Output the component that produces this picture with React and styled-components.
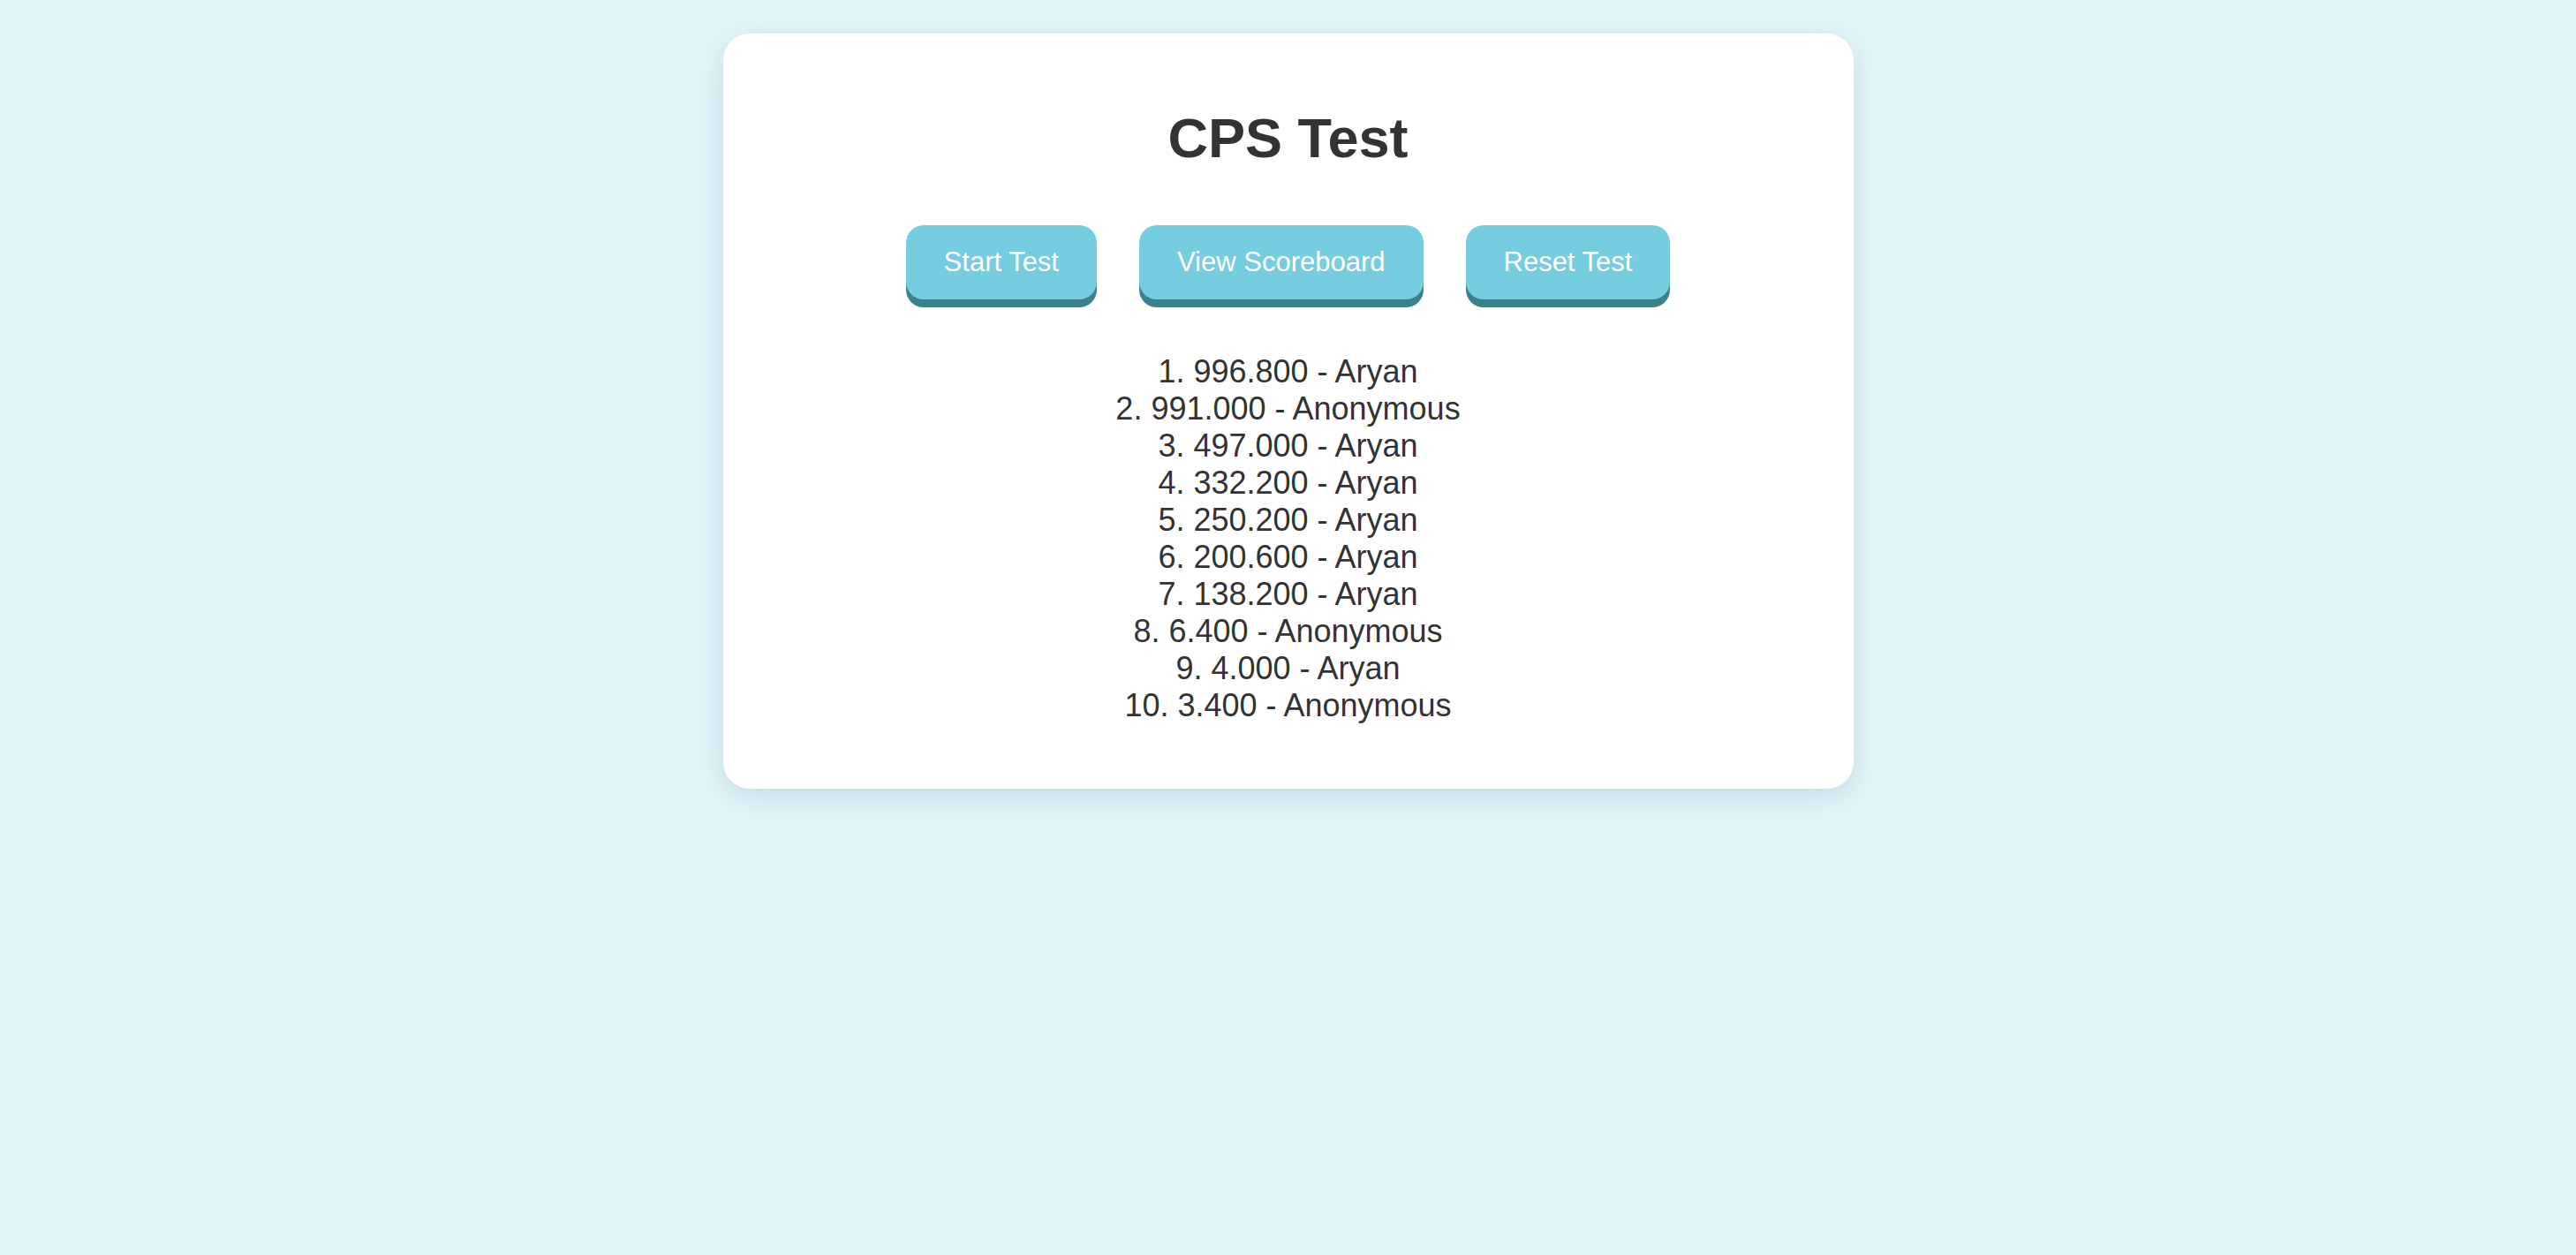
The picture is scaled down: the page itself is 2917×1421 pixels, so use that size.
import React from 'react';
import styled, { createGlobalStyle } from 'styled-components';

const GlobalStyle = createGlobalStyle`
  html, body {
    margin: 0;
    padding: 0;
    background-color: #e3f5fa;
    font-family: "Liberation Sans", Arial, sans-serif;
    min-height: 100vh;
  }
`;

const Page = styled.main`
  min-height: 100vh;
  padding-top: 38px;
  box-sizing: border-box;
`;

const Card = styled.section`
  width: 1280px;
  margin: 0 auto;
  box-sizing: border-box;
  padding: 82px 40px 73px;
  background-color: #ffffff;
  border-radius: 30px;
  box-shadow: 0 8px 32px rgba(40, 90, 110, 0.16);
  text-align: center;
`;

const Title = styled.h1`
  margin: 0;
  font-size: 63px;
  font-weight: bold;
  color: #333333;
`;

const ButtonRow = styled.div`
  display: flex;
  justify-content: center;
  gap: 48px;
  margin-top: 63px;
`;

const Button = styled.button`
  font-family: "Liberation Sans", Arial, sans-serif;
  font-size: 31px;
  color: #ffffff;
  background-color: #76cde0;
  border: none;
  border-radius: 20px;
  padding: 24px 43px;
  box-shadow: 0 9px 0 #3b818c;
  cursor: pointer;
`;

const ScoreList = styled.div`
  margin-top: 61px;
  font-size: 36px;
  line-height: 42px;
  color: #333333;
`;

const ScoreRow = styled.div``;

const scores = [
  ['996.800', 'Aryan'],
  ['991.000', 'Anonymous'],
  ['497.000', 'Aryan'],
  ['332.200', 'Aryan'],
  ['250.200', 'Aryan'],
  ['200.600', 'Aryan'],
  ['138.200', 'Aryan'],
  ['6.400', 'Anonymous'],
  ['4.000', 'Aryan'],
  ['3.400', 'Anonymous'],
];

const App = () => (
  <>
    <GlobalStyle />
    <Page>
      <Card>
        <Title>CPS Test</Title>
        <ButtonRow>
          <Button>Start Test</Button>
          <Button>View Scoreboard</Button>
          <Button>Reset Test</Button>
        </ButtonRow>
        <ScoreList>
          {scores.map(([cps, name], i) => (
            <ScoreRow key={i}>{`${i + 1}. ${cps} - ${name}`}</ScoreRow>
          ))}
        </ScoreList>
      </Card>
    </Page>
  </>
);

export default App;
